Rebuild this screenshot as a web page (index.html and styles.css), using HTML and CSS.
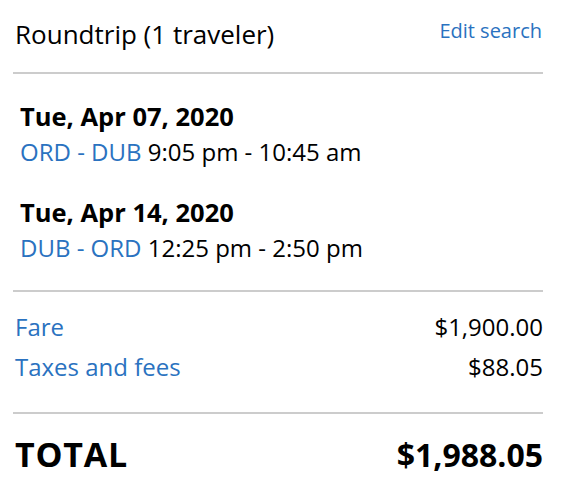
FILE: index.html
```html
<!DOCTYPE html>
<html>
<head>
<meta charset="utf-8">
<link rel="stylesheet" href="styles.css">
</head>
<body>
<div class="summary">
  <div class="header">
    <div class="title">Roundtrip (1 traveler)</div>
    <a class="edit">Edit search</a>
  </div>
  <div class="flights">
    <div class="flight">
      <div class="date">Tue, Apr 07, 2020</div>
      <div class="route"><span class="link">ORD - DUB</span> 9:05 pm - 10:45 am</div>
    </div>
    <div class="flight">
      <div class="date">Tue, Apr 14, 2020</div>
      <div class="route"><span class="link">DUB - ORD</span> 12:25 pm - 2:50 pm</div>
    </div>
  </div>
  <div class="costs">
    <div class="row"><span class="link">Fare</span><span>$1,900.00</span></div>
    <div class="row"><span class="link">Taxes and fees</span><span>$88.05</span></div>
  </div>
  <div class="total">
    <span class="total-label">TOTAL</span><span class="total-amount">$1,988.05</span>
  </div>
</div>
</body>
</html>
```
FILE: styles.css
```css
html, body {
  margin: 0;
  padding: 0;
  background: #fff;
}
body {
  font-family: "Open Sans", "Noto Sans", sans-serif;
  color: #000;
}
.summary {
  width: 530px;
  margin-left: 13px;
}
.link {
  color: #2a72c0;
}
.header {
  display: flex;
  justify-content: space-between;
  align-items: flex-start;
  padding: 19px 1px 0 2px;
  height: 74px;
  box-sizing: border-box;
  border-bottom: 2px solid #cccccc;
}
.title {
  font-size: 26px;
  line-height: 30px;
}
.edit {
  font-size: 20px;
  line-height: 24px;
  color: #2a72c0;
}
.flights {
  padding: 24px 0 24px 7px;
  border-bottom: 2px solid #cccccc;
}
.flight + .flight {
  margin-top: 24px;
}
.date {
  font-size: 25.5px;
  font-weight: 700;
  line-height: 36px;
}
.route {
  font-size: 24px;
  line-height: 36px;
}
.costs {
  padding: 15px 0 25px 2px;
  border-bottom: 2px solid #cccccc;
}
.row {
  display: flex;
  justify-content: space-between;
  font-size: 24px;
  line-height: 40px;
}
.total {
  display: flex;
  justify-content: space-between;
  align-items: baseline;
  font-weight: 700;
  line-height: 40px;
  padding: 20px 0 0 2px;
}
.total-label {
  font-size: 34px;
  letter-spacing: 0.8px;
}
.total-amount {
  font-size: 32px;
}
```
